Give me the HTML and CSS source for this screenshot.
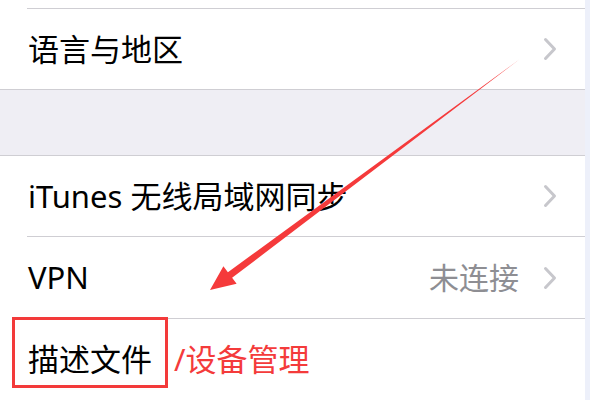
FILE: index.html
```html
<!DOCTYPE html>
<html lang="zh-CN">
<head>
<meta charset="utf-8">
<title>设置</title>
<link rel="stylesheet" href="styles.css">
</head>
<body>
<div class="page">
  <div class="main">
    <div class="cap"></div>
    <div class="sep inset"></div>
    <div class="row short">
      <span class="label">语言与地区</span>
      <span class="detail"></span>
      <svg class="chev" width="14" height="24" viewBox="0 0 14 24"><path d="M2.5 2.5 L11.5 12 L2.5 21.5" fill="none" stroke="#c7c7cc" stroke-width="3" stroke-linecap="round" stroke-linejoin="round"/></svg>
    </div>
    <div class="sep"></div>
    <div class="gap"></div>
    <div class="sep"></div>
    <div class="row short">
      <span class="label">iTunes 无线局域网同步</span>
      <span class="detail"></span>
      <svg class="chev" width="14" height="24" viewBox="0 0 14 24"><path d="M2.5 2.5 L11.5 12 L2.5 21.5" fill="none" stroke="#c7c7cc" stroke-width="3" stroke-linecap="round" stroke-linejoin="round"/></svg>
    </div>
    <div class="sep inset"></div>
    <div class="row">
      <span class="label">VPN</span>
      <span class="detail">未连接</span>
      <svg class="chev" width="14" height="24" viewBox="0 0 14 24"><path d="M2.5 2.5 L11.5 12 L2.5 21.5" fill="none" stroke="#c7c7cc" stroke-width="3" stroke-linecap="round" stroke-linejoin="round"/></svg>
    </div>
    <div class="sep inset"></div>
    <div class="row">
      <span class="label">描述文件</span>
      <span class="note">/设备管理</span>
    </div>
  </div>
  <div class="strip"></div>

  <div class="highlight"></div>
  <svg class="arrow" width="590" height="400" viewBox="0 0 590 400">
    <polygon points="520,59 232.1,277.8 236.6,283.8 210,290 223.4,266.2 227.9,272.2" fill="#f53a3b"/>
  </svg>
</div>
</body>
</html>
```

FILE: styles.css
```css
* { box-sizing: border-box; }
html, body { margin: 0; padding: 0; }
body {
  background: #ffffff;
  font-family: "Noto Sans", "Noto Sans CJK SC", sans-serif;
  color: #000;
}
.page {
  position: relative;
  display: flex;
  width: 590px;
  height: 400px;
  overflow: hidden;
}
.main {
  flex: 1;
  display: flex;
  flex-direction: column;
  background: #fff;
}
.strip {
  width: 5px;
  background: #edf0fa;
}
.cap { height: 8px; }
.sep {
  height: 1px;
  background: #cfced3;
  flex: none;
}
.sep.inset { margin-left: 27px; }
.gap {
  height: 65px;
  background: #efeef4;
  flex: none;
}
.row {
  height: 81px;
  flex: none;
  display: flex;
  align-items: center;
  padding: 0 28px 0 28px;
}
.row.short { height: 80px; }
.label {
  font-size: 31px;
  line-height: 1;
  white-space: nowrap;
}
.detail {
  margin-left: auto;
  font-size: 30px;
  line-height: 1;
  color: #8e8e93;
  margin-right: 24px;
}
.chev { flex: none; display: block; }
.note {
  font-size: 31px;
  line-height: 1;
  color: #f43b3b;
  margin-left: 22px;
}
.highlight {
  position: absolute;
  left: 12px;
  top: 317px;
  width: 156px;
  height: 71px;
  border: 3px solid #f33a3a;
}
.arrow {
  position: absolute;
  left: 0;
  top: 0;
  pointer-events: none;
}
```
